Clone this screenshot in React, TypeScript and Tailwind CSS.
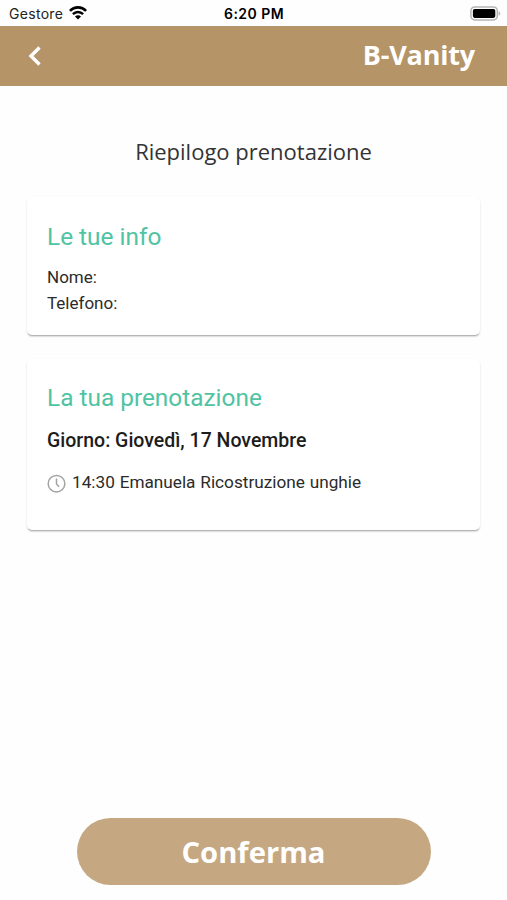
import { ReactNode } from "react";

function App() {
  return (
    <div className="flex flex-col w-full h-[900px] bg-[#fefefe] overflow-hidden font-['Roboto',sans-serif] text-[#2b2b2b]">
      <StatusBar />
      <Header />

      <main className="flex flex-col flex-1 px-[27px]">
        <h1 className="mt-[49px] h-8 leading-8 text-center whitespace-nowrap font-['Open_Sans',sans-serif] text-[22px] text-[#333]">
          Riepilogo prenotazione
        </h1>

        <Card className="mt-[30px] pt-6 h-[138px]" title="Le tue info">
          <div className="mt-[11px] text-[17px] leading-[26px]">
            <p>Nome:</p>
            <p>Telefono:</p>
          </div>
        </Card>

        <Card className="mt-6 pt-[23px] h-[171px]" title="La tua prenotazione">
          <p className="mt-[13px] text-[19.5px] leading-7 font-medium text-[#1c1c1c]">
            Giorno: Giovedì, 17 Novembre
          </p>
          <div className="flex items-center mt-[14px] gap-[5px] text-[17.2px] leading-[26px]">
            <ClockIcon />
            <span className="[word-spacing:0.6px]">
              14:30 Emanuela Ricostruzione unghie
            </span>
          </div>
        </Card>

        <button className="mt-auto mb-[15px] mx-auto w-[354px] h-[67px] pt-[2px] rounded-full bg-[#c5a882] text-white font-['Open_Sans',sans-serif] text-[29.2px] font-bold">
          Conferma
        </button>
      </main>
    </div>
  );
}

export default App;

/* Subcomponents */
function StatusBar() {
  return (
    <div className="grid grid-cols-3 items-center h-[26px] pl-[9px] pr-[6px] font-['Inter',sans-serif] text-[14px] text-[#222]">
      <div className="flex items-center gap-[6px] tracking-[0.3px]">
        <span>Gestore</span>
        <WifiIcon />
      </div>
      <span className="text-center font-semibold tracking-[0.45px] -ml-[2px] text-black">
        6:20 PM
      </span>
      <div className="flex justify-end">
        <BatteryIcon />
      </div>
    </div>
  );
}

function Header() {
  return (
    <header className="flex items-center justify-between h-[60px] pl-7 pr-8 bg-[#b59468] text-white">
      <button aria-label="Indietro">
        <svg width="14" height="20" viewBox="0 0 14 20" fill="none">
          <path d="M11.5 1.5 3 10l8.5 8.5" stroke="white" strokeWidth="3.4" />
        </svg>
      </button>
      <span className="-mt-[2px] font-['Open_Sans',sans-serif] text-[27px] font-bold tracking-[-0.2px]">
        B-Vanity
      </span>
    </header>
  );
}

type CardProps = {
  title: string;
  className: string;
  children: ReactNode;
};

function Card({ title, className, children }: CardProps) {
  return (
    <section
      className={`shrink-0 px-5 rounded-[5px] bg-white shadow-[0_2px_2px_-1px_rgba(0,0,0,0.35),0_1px_3px_rgba(0,0,0,0.07)] ${className}`}
    >
      <h2 className="text-[24.4px] leading-8 text-[#50c3a3]">{title}</h2>
      {children}
    </section>
  );
}

function ClockIcon() {
  return (
    <svg width="20" height="22" viewBox="0 0 20 22" fill="none" stroke="#a3a3a3">
      <circle cx="9.5" cy="12.7" r="8.3" strokeWidth="1.5" />
      <path d="M9.5 7.5v5.4l2.5 2.8" strokeWidth="1.5" />
    </svg>
  );
}

function WifiIcon() {
  return (
    <svg width="18" height="14" viewBox="0 0 18 14" fill="none" stroke="black">
      <path d="M.9 4.9c4.5-4.7 11.7-4.7 16.2 0" strokeWidth="2.6" />
      <path d="M3.9 8.1c2.9-2.9 7.3-2.9 10.2 0" strokeWidth="2.5" />
      <path d="M9 13.4 6 10.4c1.7-1.5 4.3-1.5 6 0Z" fill="black" stroke="none" />
    </svg>
  );
}

function BatteryIcon() {
  return (
    <svg width="31" height="15" viewBox="0 0 31 15" fill="none">
      <rect x=".9" y=".9" width="26.4" height="13" rx="3.8" stroke="#b5b5b5" strokeWidth="1.5" />
      <rect x="2.9" y="2.9" width="22.4" height="9" rx="1.8" fill="black" />
      <path d="M28.6 5.2c2.2.7 2.2 3.8 0 4.5Z" fill="#b5b5b5" />
    </svg>
  );
}
